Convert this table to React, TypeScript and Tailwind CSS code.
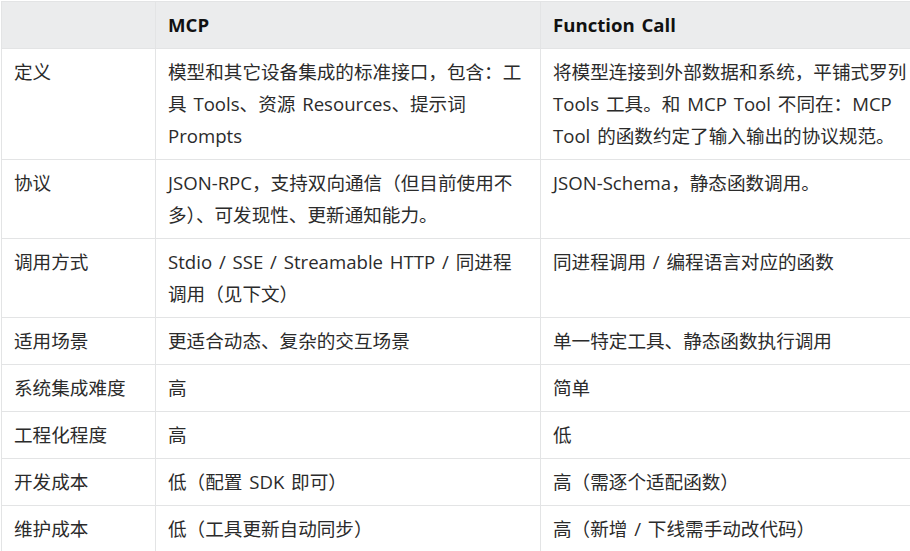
const rows: [string, string, string][] = [
  [
    "定义",
    "模型和其它设备集成的标准接口，包含：工具 Tools、资源 Resources、提示词 Prompts",
    "将模型连接到外部数据和系统，平铺式罗列 Tools 工具。和 MCP Tool 不同在：MCP Tool 的函数约定了输入输出的协议规范。",
  ],
  ["协议", "JSON-RPC，支持双向通信（但目前使用不多）、可发现性、更新通知能力。", "JSON-Schema，静态函数调用。"],
  ["调用方式", "Stdio / SSE / Streamable HTTP / 同进程调用（见下文）", "同进程调用 / 编程语言对应的函数"],
  ["适用场景", "更适合动态、复杂的交互场景", "单一特定工具、静态函数执行调用"],
  ["系统集成难度", "高", "简单"],
  ["工程化程度", "高", "低"],
  ["开发成本", "低（配置 SDK 即可）", "高（需逐个适配函数）"],
  ["维护成本", "低（工具更新自动同步）", "高（新增 / 下线需手动改代码）"],
];

const App = () => {
  return (
    <div className="w-[910px] h-[551px] overflow-hidden bg-white pl-[1px] pt-[1px] font-['Open_Sans','Noto_Sans_CJK_SC',sans-serif] text-[18.6px] leading-[32px] text-[#2b2b2b] [word-spacing:2px]">
      <table className="w-[925px] table-fixed border-collapse">
        <colgroup>
          <col className="w-[154px]" />
          <col className="w-[385px]" />
          <col className="w-[386px]" />
        </colgroup>
        <thead>
          <tr className="bg-[#ebeced]">
            <th className="border border-[#e3e4e5] px-3 py-[7px]" />
            <th className="border border-[#e3e4e5] px-3 py-[7px] text-left font-bold text-[#111]">MCP</th>
            <th className="border border-[#e3e4e5] px-3 py-[7px] text-left font-bold text-[#111]">Function Call</th>
          </tr>
        </thead>
        <tbody>
          {rows.map(([name, mcp, fc]) => (
            <tr key={name}>
              <td className="border border-[#e3e4e5] px-3 py-[7px] align-top">{name}</td>
              <td className="border border-[#e3e4e5] px-3 py-[7px] align-top">{mcp}</td>
              <td className="border border-[#e3e4e5] px-3 py-[7px] align-top">{fc}</td>
            </tr>
          ))}
        </tbody>
      </table>
    </div>
  );
};

export default App;
